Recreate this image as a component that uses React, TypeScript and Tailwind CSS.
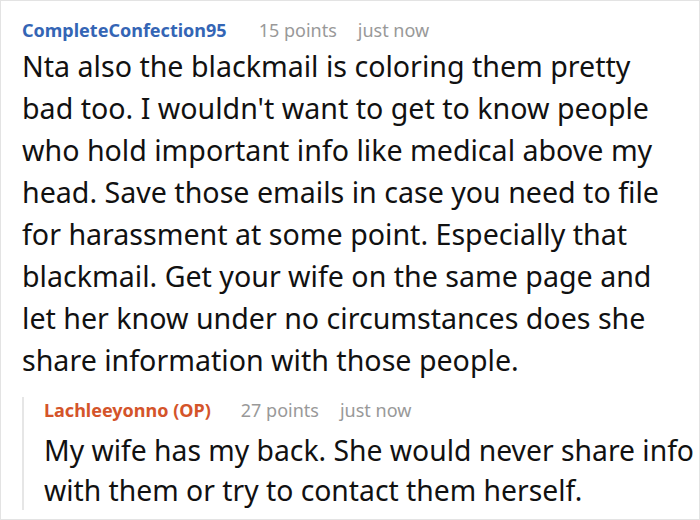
export default function App() {
  return (
    <div className="w-[700px] h-[520px] overflow-hidden border border-[#e3e3e3] bg-white pl-[21px] pr-[12px] pt-[16px] font-['Noto_Sans','Open_Sans',sans-serif]">
      <div className="flex items-baseline text-[18px] leading-[26px]">
        <span className="font-bold text-[#3465b5]">CompleteConfection95</span>
        <span className="ml-[32px] text-[#999999]">15 points</span>
        <span className="ml-[21px] text-[#999999]">just now</span>
      </div>
      <p className="mt-[2px] mr-[6px] text-[28.6px] leading-[42px] text-[#111111]">
        Nta also the blackmail is coloring them pretty bad too. I wouldn't want to get to know people who hold
        important info like medical above my head. Save those emails in case you need to file for harassment at
        some point. Especially that blackmail. Get your wife on the same page and let her know under no
        circumstances does she share information with those people.
      </p>
      <div className="mt-[16px] border-l-2 border-[#e6e6e6] pl-[20px]">
        <div className="flex items-baseline text-[18px] leading-[26px]">
          <span className="font-bold text-[#d4542a]">Lachleeyonno (OP)</span>
          <span className="ml-[30px] text-[#999999]">27 points</span>
          <span className="ml-[21px] text-[#999999]">just now</span>
        </div>
        <p className="mt-[7px] mr-[-10px] text-[28.3px] leading-[40px] text-[#111111]">
          My wife has my back. She would never share info with them or try to contact them herself.
        </p>
      </div>
    </div>
  )
}
